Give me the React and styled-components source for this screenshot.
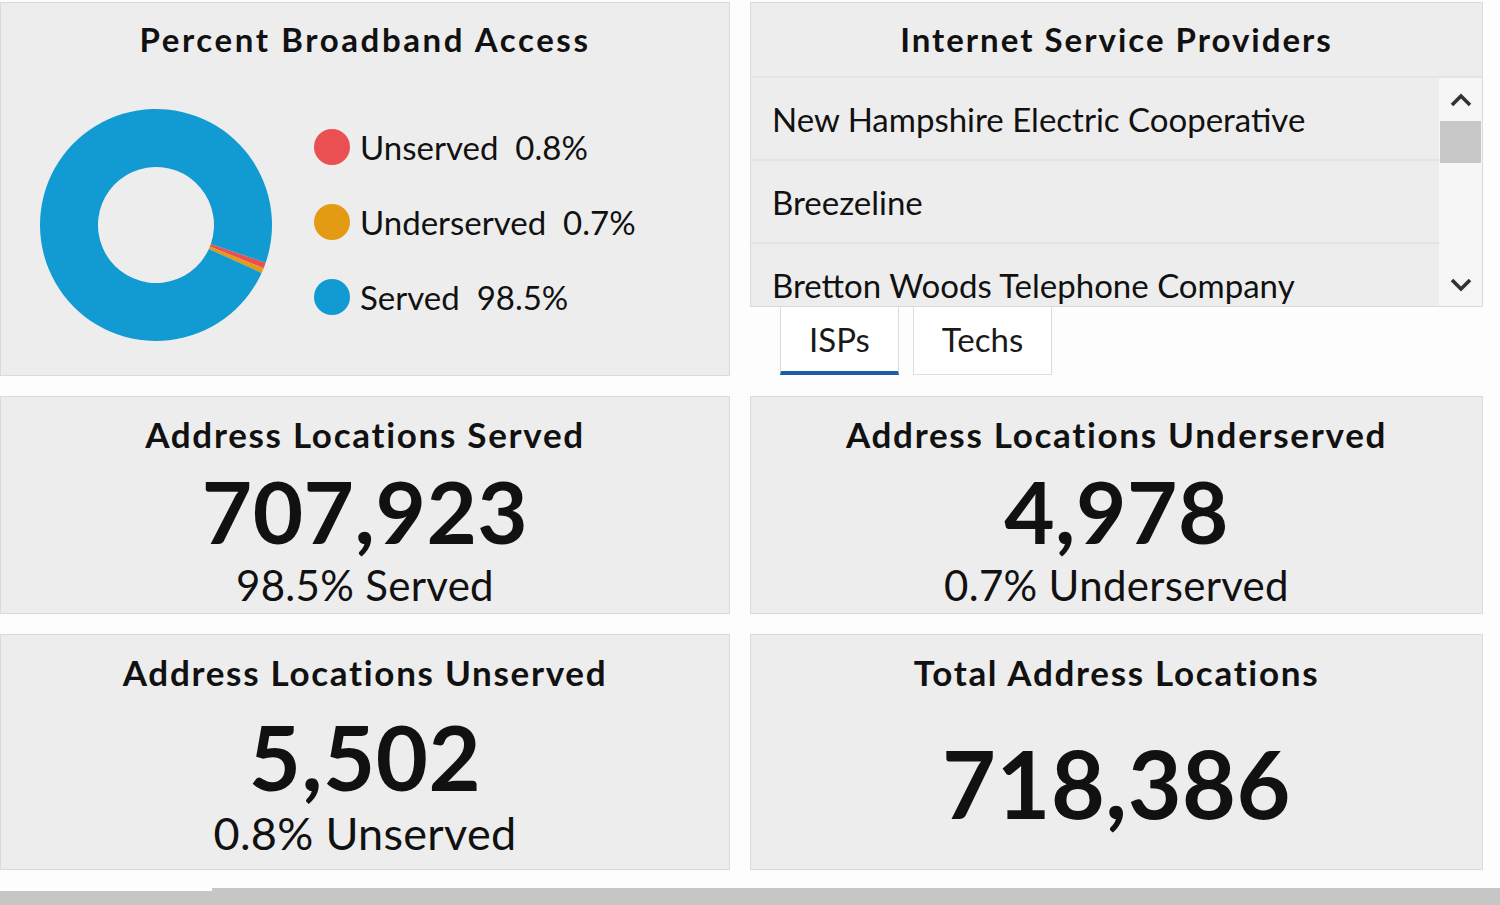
import React from 'react';
import styled, {createGlobalStyle} from 'styled-components';

const GlobalStyle = createGlobalStyle`
  html, body {
    margin: 0;
    padding: 0;
    background: #fdfdfd;
    font-family: 'Lato', 'Noto Sans', sans-serif;
    color: #111;
  }
`;

const slices = [
    {label: 'Unserved', value: 0.8, color: '#ea4f52'},
    {label: 'Underserved', value: 0.7, color: '#e29b12'},
    {label: 'Served', value: 98.5, color: '#129bd2'},
];

const providers = [
    'New Hampshire Electric Cooperative',
    'Breezeline',
    'Bretton Woods Telephone Company',
];

function arcPath(cx, cy, r1, r2, a0, a1) {
    const rad = (a) => (a * Math.PI) / 180;
    const p = (r, a) => [cx + r * Math.cos(rad(a)), cy + r * Math.sin(rad(a))];
    const large = a1 - a0 > 180 ? 1 : 0;
    const [x0, y0] = p(r2, a0);
    const [x1, y1] = p(r2, a1);
    const [x2, y2] = p(r1, a1);
    const [x3, y3] = p(r1, a0);
    return `M${x0} ${y0} A${r2} ${r2} 0 ${large} 1 ${x1} ${y1} L${x2} ${y2} A${r1} ${r1} 0 ${large} 0 ${x3} ${y3} Z`;
}

const Donut = () => {
    let angle = 19;
    return (
        <svg width="234" height="234" viewBox="0 0 234 234">
            {slices.map((s) => {
                const a0 = angle;
                const a1 = angle + (s.value / 100) * 360;
                angle = a1;
                return <path key={s.label} d={arcPath(117, 117, 58, 116, a0, a1)} fill={s.color} />;
            })}
        </svg>
    );
};

const Chevron = ({up}) => (
    <svg width="24" height="16" viewBox="0 0 24 16">
        <path d={up ? 'M3 13 L12 4 L21 13' : 'M3 3 L12 12 L21 3'} fill="none" stroke="#333" strokeWidth="3.6" />
    </svg>
);

const StatCard = ({title, value, sub, numSize, subSize}) => (
    <Card>
        <StatTitle>{title}</StatTitle>
        <StatBody>
            <BigNumber size={numSize}>{value}</BigNumber>
            {sub && <SubText size={subSize}>{sub}</SubText>}
        </StatBody>
    </Card>
);

export default function App() {
    return (
        <Page>
            <GlobalStyle />
            <Grid>
                <Card>
                    <Title>Percent Broadband Access</Title>
                    <ChartRow>
                        <Donut />
                        <Legend>
                            {slices.map((s) => (
                                <LegendItem key={s.label}>
                                    <Dot color={s.color} />
                                    <span>{s.label}&nbsp; {s.value}%</span>
                                </LegendItem>
                            ))}
                        </Legend>
                    </ChartRow>
                </Card>
                <Column>
                    <ListCard>
                        <ListHeader>Internet Service Providers</ListHeader>
                        <ListBody>
                            <Rows>
                                {providers.map((p) => (
                                    <Row key={p}>{p}</Row>
                                ))}
                            </Rows>
                            <ScrollBar>
                                <Arrow><Chevron up /></Arrow>
                                <Thumb />
                                <Track />
                                <Arrow><Chevron /></Arrow>
                            </ScrollBar>
                        </ListBody>
                    </ListCard>
                    <Tabs>
                        <Tab active>ISPs</Tab>
                        <Tab>Techs</Tab>
                    </Tabs>
                </Column>
                <StatCard title="Address Locations Served" value="707,923" sub="98.5% Served" numSize={87} subSize={42} />
                <StatCard title="Address Locations Underserved" value="4,978" sub="0.7% Underserved" numSize={87} subSize={42} />
                <StatCard title="Address Locations Unserved" value="5,502" sub="0.8% Unserved" numSize={90} subSize={45} />
                <StatCard title="Total Address Locations" value="718,386" numSize={93} />
            </Grid>
            <BottomBar>
                <BarStub />
            </BottomBar>
        </Page>
    );
}

const Page = styled.div`
  width: 1500px;
  height: 905px;
  overflow: hidden;
  display: flex;
  flex-direction: column;
`;

const Grid = styled.div`
  display: grid;
  grid-template-columns: 730px 733px;
  grid-template-rows: 374px 218px 236px;
  column-gap: 20px;
  row-gap: 20px;
  padding-top: 2px;
`;

const Card = styled.div`
  background: #ededed;
  border: 1px solid #dadada;
  box-sizing: border-box;
  display: flex;
  flex-direction: column;
  align-items: center;
`;

const Title = styled.div`
  font-weight: 700;
  font-size: 33px;
  letter-spacing: 2.6px;
  margin-top: 16px;
  line-height: 40px;
`;

const ChartRow = styled.div`
  display: flex;
  align-items: center;
  align-self: flex-start;
  margin-top: 49px;
  margin-left: 38px;
`;

const Legend = styled.div`
  display: flex;
  flex-direction: column;
  gap: 31px;
  margin-left: 41px;
  margin-top: -6px;
`;

const LegendItem = styled.div`
  display: flex;
  align-items: center;
  font-size: 33px;
  line-height: 44px;
  gap: 10px;
`;

const Dot = styled.span`
  width: 36px;
  height: 36px;
  border-radius: 50%;
  background: ${(p) => p.color};
`;

const Column = styled.div`
  display: flex;
  flex-direction: column;
`;

const ListCard = styled.div`
  height: 305px;
  background: #ededed;
  border: 1px solid #dadada;
  box-sizing: border-box;
  display: flex;
  flex-direction: column;
`;

const ListHeader = styled.div`
  height: 75px;
  flex-shrink: 0;
  box-sizing: border-box;
  border-bottom: 2px solid #e4e4e4;
  text-align: center;
  font-weight: 700;
  font-size: 33px;
  letter-spacing: 2px;
  line-height: 72px;
`;

const ListBody = styled.div`
  flex: 1;
  display: flex;
  overflow: hidden;
`;

const Rows = styled.div`
  flex: 1;
  overflow: hidden;
`;

const Row = styled.div`
  height: 83px;
  box-sizing: border-box;
  border-bottom: 2px solid #e3e3e3;
  padding-left: 21px;
  font-size: 33px;
  line-height: 82px;
`;

const ScrollBar = styled.div`
  width: 43px;
  background: #f6f6f6;
  display: flex;
  flex-direction: column;
  align-items: center;
`;

const Arrow = styled.div`
  height: 43px;
  display: flex;
  align-items: center;
  justify-content: center;
`;

const Thumb = styled.div`
  width: 41px;
  height: 42px;
  background: #c7c7c7;
`;

const Track = styled.div`
  flex: 1;
`;

const Tabs = styled.div`
  display: flex;
  gap: 14px;
  padding-left: 30px;
`;

const Tab = styled.div`
  height: 68px;
  padding: 0 28px;
  box-sizing: border-box;
  background: #fff;
  border: 1px solid #dcdcdc;
  border-top: none;
  border-bottom: ${(p) => (p.active ? '4px solid #1a5ea8' : '1px solid #dcdcdc')};
  font-size: 33px;
  line-height: 64px;
  color: #1a1a1a;
`;

const StatTitle = styled.div`
  font-weight: 700;
  font-size: 35px;
  letter-spacing: 1.7px;
  margin-top: 16px;
  line-height: 42px;
`;

const StatBody = styled.div`
  flex: 1;
  display: flex;
  flex-direction: column;
  align-items: center;
  justify-content: center;
  gap: 10px;
  padding-top: 4px;
`;

const BigNumber = styled.div`
  font-weight: 700;
  font-size: ${(p) => p.size}px;
  line-height: ${(p) => p.size}px;
  letter-spacing: 0.5px;
`;

const SubText = styled.div`
  font-size: ${(p) => p.size}px;
  line-height: ${(p) => p.size}px;
  letter-spacing: 0.3px;
`;

const BottomBar = styled.div`
  margin-top: 18px;
  height: 17px;
  background: #c6c6c6;
  display: flex;
`;

const BarStub = styled.div`
  width: 212px;
  height: 3px;
  background: #fff;
`;
